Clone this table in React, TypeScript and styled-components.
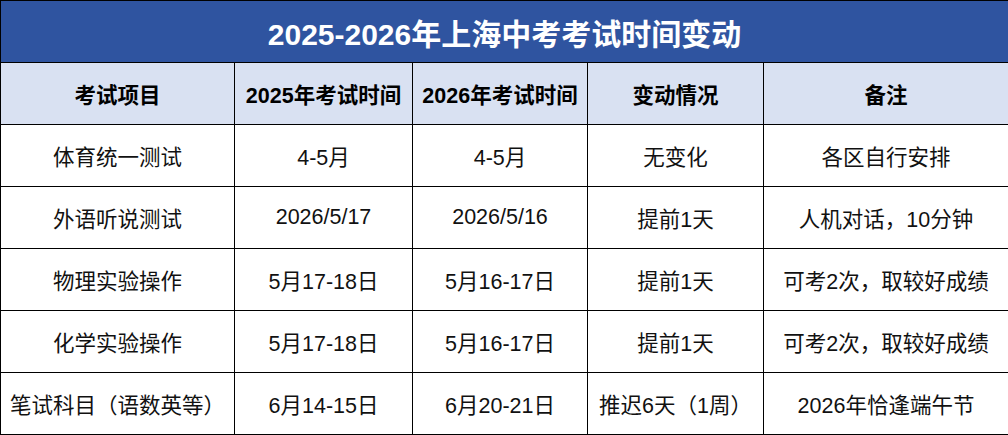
import React from "react";
import styled, { createGlobalStyle } from "styled-components";

const Global = createGlobalStyle`
  html, body { margin: 0; padding: 0; background: #ffffff; }
  body { font-family: "Liberation Sans", "Noto Sans CJK SC", sans-serif; }
`;

const Table = styled.table`
  width: 1008px;
  table-layout: fixed;
  border-collapse: collapse;
  font-family: "Liberation Sans", "Noto Sans CJK SC", sans-serif;
  color: #000;
`;

const TitleCell = styled.th`
  height: 61px;
  padding: 0;
  background: #2f54a0;
  color: #ffffff;
  font-size: 30px;
  font-weight: 700;
  text-align: center;
  vertical-align: middle;
  border: 1px solid #000;
`;

const HeadCell = styled.th`
  height: 61px;
  padding: 0;
  background: #d9e1f2;
  font-size: 21.5px;
  font-weight: 700;
  text-align: center;
  vertical-align: middle;
  border: 1px solid #000;
`;

const Cell = styled.td`
  height: 61px;
  padding: 0;
  background: #ffffff;
  color: #111;
  font-size: 21.5px;
  font-weight: 400;
  text-align: center;
  vertical-align: middle;
  white-space: nowrap;
  border: 1px solid #000;
`;

const widths = [234, 178, 175, 176, 245];
const headers = ["考试项目", "2025年考试时间", "2026年考试时间", "变动情况", "备注"];
const rows = [
  ["体育统一测试", "4-5月", "4-5月", "无变化", "各区自行安排"],
  ["外语听说测试", "2026/5/17", "2026/5/16", "提前1天", "人机对话，10分钟"],
  ["物理实验操作", "5月17-18日", "5月16-17日", "提前1天", "可考2次，取较好成绩"],
  ["化学实验操作", "5月17-18日", "5月16-17日", "提前1天", "可考2次，取较好成绩"],
  ["笔试科目（语数英等）", "6月14-15日", "6月20-21日", "推迟6天（1周）", "2026年恰逢端午节"],
];

export default function App() {
  return (
    <>
      <Global />
      <Table>
        <colgroup>
          {widths.map((w, i) => (
            <col key={i} style={{ width: w }} />
          ))}
        </colgroup>
        <thead>
          <tr>
            <TitleCell colSpan={5}>2025-2026年上海中考考试时间变动</TitleCell>
          </tr>
          <tr>
            {headers.map((h) => (
              <HeadCell key={h}>{h}</HeadCell>
            ))}
          </tr>
        </thead>
        <tbody>
          {rows.map((r, i) => (
            <tr key={i}>
              {r.map((c, j) => (
                <Cell key={j}>{c}</Cell>
              ))}
            </tr>
          ))}
        </tbody>
      </Table>
    </>
  );
}
